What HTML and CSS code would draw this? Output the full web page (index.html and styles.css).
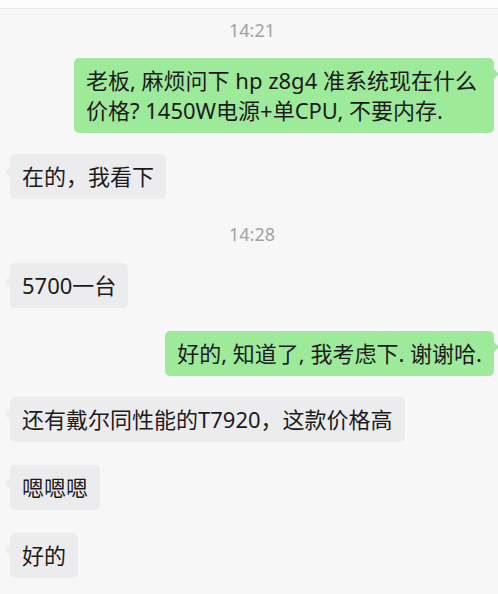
FILE: index.html
```html
<!DOCTYPE html>
<html lang="zh">
<head>
    <meta charset="UTF-8">
    <title>聊天记录</title>
    <link rel="stylesheet" href="styles.css">
</head>
<body>
    <div class="topbar"></div>
    <div class="chat">
        <div class="time first">14:21</div>
        <div class="bubble mine">老板, 麻烦问下 hp z8g4 准系统现在什么价格? 1450W电源+单CPU, 不要内存.</div>
        <div class="bubble theirs tight">在的，我看下</div>

        <div class="time">14:28</div>
        <div class="bubble theirs">5700一台</div>
        <div class="bubble mine">好的, 知道了, 我考虑下. 谢谢哈.</div>
        <div class="bubble theirs">还有戴尔同性能的T7920，这款价格高</div>
        <div class="bubble theirs">嗯嗯嗯</div>
        <div class="bubble theirs">好的</div>
    </div>
</body>
</html>
```

FILE: styles.css
```css
body {
    margin: 0;
    padding: 0;
    background: #f7f7f7;
    font-family: "Noto Sans", "Noto Sans CJK SC", sans-serif;
    color: #1b1b1b;
}

.topbar {
    height: 8px;
    background: #fcfcfc;
    border-bottom: 1px solid #e8e8e8;
}

.chat {
    display: flex;
    flex-direction: column;
    align-items: flex-start;
    padding: 0 4px 0 10px;
}

.time {
    align-self: center;
    font-size: 18px;
    line-height: 20px;
    color: #a2a2a2;
    margin: 25px 0 19px;
}

.time.first {
    margin-top: 11px;
    margin-bottom: 18px;
}

.bubble {
    position: relative;
    font-size: 22px;
    line-height: 30px;
    padding: 7px 12px 8px;
    border-radius: 5px;
    margin-bottom: 23px;
    max-width: 396px;
}

.bubble.tight {
    margin-bottom: 0;
}

.bubble::after {
    content: "";
    position: absolute;
    top: 11px;
    border-top: 5px solid transparent;
    border-bottom: 5px solid transparent;
}

.mine {
    align-self: flex-end;
    background: #9eea9b;
    margin-bottom: 21px;
}

.mine::after {
    right: -5px;
    border-left: 5px solid #9eea9b;
}

.theirs {
    background: #ececef;
}

.theirs::after {
    left: -5px;
    top: 13px;
    border-right: 5px solid #ececef;
}

.mine + .theirs {
    margin-top: 0;
}
```
